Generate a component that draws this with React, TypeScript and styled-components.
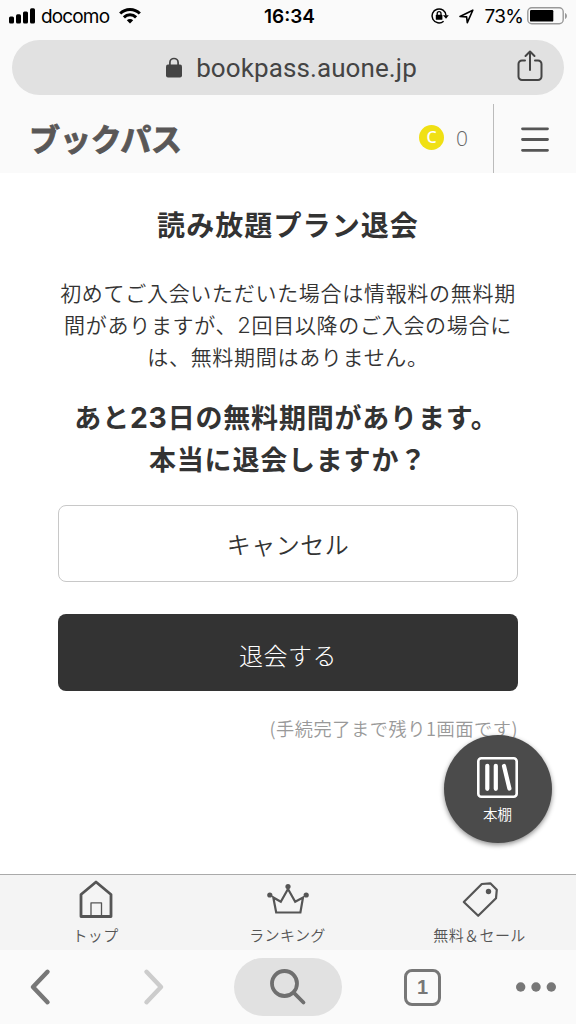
import React from "react";
import styled, { createGlobalStyle } from "styled-components";

const GlobalStyle = createGlobalStyle`
  *, *::before, *::after { box-sizing: border-box; }
  body { margin: 0; background: #fff; }
  button { border: 0; padding: 0; background: none; font: inherit; color: inherit; }
  h1, h2, p { margin: 0; }
  svg { display: block; flex: none; overflow: visible; }
`;

const Screen = styled.div`
  position: relative;
  display: flex;
  flex-direction: column;
  width: 576px;
  height: 1024px;
  overflow: hidden;
  background: #fff;
  color: #333;
  font-family: "Noto Sans CJK JP", sans-serif;
`;

const BrowserTop = styled.div`
  height: 104px;
  background: #fafafa;
`;

const StatusBar = styled.div`
  display: grid;
  grid-template-columns: 1fr auto 1fr;
  align-items: center;
  height: 32px;
  padding: 0 8px 0 9px;
  color: #000;
  font: 400 19px/24px Inter, sans-serif;
`;

const StatusGroup = styled.div<{ $end?: boolean }>`
  display: flex;
  align-items: center;
  justify-content: ${(p) => (p.$end ? "flex-end" : "flex-start")};
`;

const Carrier = styled.span`
  margin: 0 10px 0 6px;
  padding-top: 1px;
  letter-spacing: -0.85px;
`;

const Clock = styled.span`
  padding: 1px 0 0 2px;
  font-weight: 600;
  letter-spacing: 0;
`;

const Percent = styled.span`
  margin: 0 4px 0 11px;
  padding-top: 1px;
  letter-spacing: -0.8px;
`;

const AddressBar = styled.div`
  display: grid;
  grid-template-columns: 1fr auto 1fr;
  align-items: center;
  height: 55px;
  margin: 8px 12px 0;
  padding: 0 21px;
  border-radius: 28px;
  background: #e1e1e1;
  color: #444;
`;

const Address = styled.div`
  grid-column: 2;
  display: flex;
  align-items: center;
  gap: 14px;
  margin-left: 7px;
  font: 400 26px/32px Roboto, sans-serif;
  letter-spacing: 0.1px;
`;

const ShareButton = styled.button`
  justify-self: end;
  padding-bottom: 4px;
`;

const SiteHeader = styled.header`
  display: flex;
  align-items: center;
  height: 69px;
  padding-left: 29px;
  background: #fafafa;
`;

const Logo = styled.div`
  flex: 1;
  padding-bottom: 1px;
  color: #595757;
  font-size: 31px;
  font-weight: 700;
  line-height: 40px;
  letter-spacing: -0.1px;
  -webkit-text-stroke: 0.9px #595757;
`;

const Coin = styled.span`
  display: grid;
  place-items: center;
  width: 25px;
  height: 25px;
  margin-bottom: 3px;
  border-radius: 50%;
  background: #f0e014;
  color: #fff;
  font: 500 16px/25px "Noto Sans", sans-serif;
`;

const CoinCount = styled.span`
  width: 49px;
  padding: 0 0 2px 12px;
  color: #666;
  font: 300 21px/28px "Open Sans", sans-serif;
`;

const MenuButton = styled.button`
  display: grid;
  place-items: center;
  width: 83px;
  height: 69px;
  padding: 2px 0 0 0;
  border-left: 1.5px solid #bbb;
`;

const Content = styled.main`
  flex: 1;
  display: flex;
  flex-direction: column;
  padding: 29px 58px 0;
  text-align: center;
`;

const Title = styled.h1`
  font-size: 28px;
  font-weight: 700;
  line-height: 44px;
  letter-spacing: 1.1px;
`;

const Notice = styled.p`
  margin: 30px -10px 0;
  font-size: 21px;
  font-weight: 350;
  line-height: 32px;
  letter-spacing: 0.7px;
`;

const Question = styled.h2`
  margin: 24px -10px 0;
  font-size: 27px;
  font-weight: 700;
  line-height: 42px;
  letter-spacing: 0.8px;
`;

const QuestionLead = styled.span`
  margin-right: 3px;
`;

const Digits = styled.span`
  font-family: Inter, sans-serif;
  font-size: 1.05em;
  line-height: 0;
`;

const ActionButton = styled.button<{ $primary?: boolean }>`
  height: 77px;
  margin-top: ${(p) => (p.$primary ? 32 : 25)}px;
  padding-top: ${(p) => (p.$primary ? 4 : 1)}px;
  border: ${(p) => (p.$primary ? "0" : "1.5px solid #c8c8c8")};
  border-radius: 8px;
  background: ${(p) => (p.$primary ? "#333" : "#fff")};
  color: ${(p) => (p.$primary ? "#fff" : "#333")};
  font-size: 24px;
  font-weight: ${(p) => (p.$primary ? 300 : 350)};
  line-height: 36px;
  letter-spacing: 0.5px;
`;

const Remaining = styled.p`
  margin-top: 23px;
  color: #999;
  font-size: 18.2px;
  font-weight: 350;
  line-height: 28px;
  letter-spacing: 0.55px;
  text-align: right;
`;

const ShelfButton = styled.button`
  position: absolute;
  left: 444px;
  top: 735px;
  display: flex;
  flex-direction: column;
  align-items: center;
  width: 108px;
  height: 108px;
  padding: 22px 1px 0 0;
  border-radius: 50%;
  background: #4b4b4b;
  box-shadow: 0 2px 5px rgba(0, 0, 0, 0.45);
  color: #fff;
  font-size: 14.5px;
  font-weight: 350;
  line-height: 20px;
`;

const ShelfLabel = styled.span`
  margin-top: 6px;
`;

const SiteNav = styled.nav`
  display: grid;
  grid-template-columns: repeat(3, 1fr);
  height: 76px;
  border-top: 1.5px solid #aaa;
  background: #f4f4f4;
`;

const NavItem = styled.button`
  display: flex;
  flex-direction: column;
  align-items: center;
  padding: 5px 1px 0 0;
  color: #555;
  font-size: 15px;
  font-weight: 350;
  line-height: 22px;
  letter-spacing: 0.4px;
`;

const NavLabel = styled.span`
  margin-top: 6px;
`;

const BrowserBar = styled.div`
  display: flex;
  align-items: center;
  height: 74px;
  padding-left: 30px;
  background: #fafafa;
  color: #777;
`;

const BarButton = styled.button<{ $gap?: number }>`
  margin-left: ${(p) => p.$gap ?? 0}px;
`;

const SearchPill = styled(BarButton)`
  display: grid;
  place-items: center;
  width: 108px;
  height: 58px;
  border-radius: 29px;
  background: #e1e1e1;
`;

const TabCount = styled(BarButton)`
  width: 37px;
  height: 37px;
  border: 3.5px solid #777;
  border-radius: 8px;
  font: 700 20px/30px "Liberation Sans", sans-serif;
`;

const SignalIcon = () => (
  <svg width="26" height="16" viewBox="0 0 26 16" fill="#000">
    <rect x="0" y="8.5" width="5" height="7" rx="1.5" />
    <rect x="7" y="6.3" width="5" height="9.2" rx="1.5" />
    <rect x="14" y="3.5" width="5" height="12" rx="1.5" />
    <rect x="21" y="0.2" width="5" height="15.3" rx="1.5" />
  </svg>
);

const WifiIcon = () => (
  <svg width="22" height="16" viewBox="0 0 22 16" fill="none" stroke="#000" strokeWidth="3">
    <path d="M1.2 5.5C6.5 0 15.5 0 20.8 5.500" />
    <path d="M4.9 9.4c3.4-3.4 8.8-3.4 12.2 0" />
    <path d="M7.8 12.3c1.8-1.8 4.6-1.8 6.4 0L11 15.500z" fill="#000" stroke="none" />
  </svg>
);

const RotationLockIcon = () => (
  <svg width="18" height="16" viewBox="0 0 18 16" fill="none" stroke="#000" strokeWidth="1.5">
    <path d="M12.6 13.2A7 7 0 1 1 15 7.500" />
    <path d="M12 7.300h5.800L15 10.800z" fill="#000" stroke="none" />
    <rect x="4.800" y="6.800" width="6.600" height="5" rx="0.6" fill="#000" stroke="none" />
    <path d="M6.200 7V5.500a1.900 1.900 0 0 1 3.800 0V7" strokeWidth="1.300" />
  </svg>
);

const LocationIcon = () => (
  <svg width="15" height="15" viewBox="0 0 15 15" fill="none" stroke="#000" strokeWidth="1.6" strokeLinejoin="round">
    <path d="M1 7.500 13.800 1.200 8.300 13.600 7.600 7.900z" />
  </svg>
);

const StatusIcons = styled.span`
  display: flex;
  align-items: center;
  gap: 10px;
`;

const BatteryIcon = () => (
  <svg width="41" height="18" viewBox="0 0 41 18">
    <rect x="0.8" y="0.8" width="35.400" height="16" rx="4" fill="none" stroke="#999" strokeWidth="1.4" />
    <rect x="3" y="3" width="23.300" height="11.600" rx="1.2" fill="#000" />
    <path d="M38 6c2.600.7 2.600 5.300 0 6z" fill="#999" />
  </svg>
);

const LockIcon = () => (
  <svg width="16" height="20" viewBox="0 0 16 20" fill="none" stroke="#444" strokeWidth="1.7">
    <rect x="0" y="6.500" width="16" height="13" rx="2" fill="#444" stroke="none" />
    <path d="M3.900 8V4.600a4.100 4.100 0 0 1 8.200 0V8" />
  </svg>
);

const ShareIcon = () => (
  <svg width="26" height="32" viewBox="0 0 26 32" fill="none" stroke="#444" strokeWidth="2" strokeLinecap="round" strokeLinejoin="round">
    <path d="M8 10.500H5a3.500 3.500 0 0 0-3.500 3.500v12.500A3.500 3.500 0 0 0 5 30h16a3.500 3.500 0 0 0 3.500-3.500V14a3.500 3.500 0 0 0-3.500-3.500h-3M13 20V2M8.500 6 13 1.500 17.500 6" />
  </svg>
);

const MenuIcon = () => (
  <svg width="28" height="25" viewBox="0 0 28 25" stroke="#555" strokeWidth="2.800" strokeLinecap="round">
    <path d="M1.500 1.800h25M1.500 12.500h25M1.500 23.300h25" />
  </svg>
);

const ShelfIcon = () => (
  <svg width="41" height="41" viewBox="0 0 41 41" fill="none" stroke="#fff" strokeLinecap="round">
    <rect x="1.300" y="1.300" width="38.400" height="38.400" rx="3" strokeWidth="2.600" />
    <path d="M10.300 8.800v23M18.800 8.800v23M27 9l5.400 22.500" strokeWidth="4.200" />
  </svg>
);

const HomeIcon = () => (
  <svg width="34" height="38" viewBox="0 0 34 38" fill="none" stroke="#555" strokeLinejoin="round">
    <path d="M2 14.500 17 2l15 12.500V36.500H2z" strokeWidth="2.800" />
    <path d="M12 36V22.800h10.500V36" strokeWidth="1.300" />
  </svg>
);

const CrownIcon = () => (
  <svg width="42" height="38" viewBox="0 0 42 38" fill="none" stroke="#555">
    <path d="M6.300 17.500 9.200 32.500h24.200l2.600-15-7.800 4.300L21 9l-7.200 12.800z" strokeWidth="2.200" />
    <g fill="#555" stroke="none">
      <circle cx="2.800" cy="15" r="2.600" />
      <circle cx="21" cy="6.500" r="2.600" />
      <circle cx="39.200" cy="15" r="2.600" />
    </g>
  </svg>
);

const TagIcon = () => (
  <svg width="36" height="38" viewBox="0 0 36 38" fill="none" stroke="#555" strokeWidth="2.200" strokeLinejoin="round">
    <path d="M1.800 22 19.800 4 28.300 3.300 34.800 9.700 34 18.300 16.200 35.800z" />
    <circle cx="26.500" cy="11.500" r="2.700" fill="#555" stroke="none" />
  </svg>
);

const BackIcon = () => (
  <svg width="20" height="36" viewBox="0 0 20 36" fill="none" stroke="#777" strokeWidth="4.500" strokeLinecap="round" strokeLinejoin="round">
    <path d="M17.500 2.800 3 18l14.500 15.200" />
  </svg>
);

const ForwardIcon = () => (
  <svg width="20" height="36" viewBox="0 0 20 36" fill="none" stroke="#ccc" strokeWidth="4.500" strokeLinecap="round" strokeLinejoin="round">
    <path d="M2.500 2.800 17 18 2.500 33.200" />
  </svg>
);

const SearchIcon = () => (
  <svg width="36" height="36" viewBox="0 0 36 36" fill="none" stroke="#6f6f6f" strokeWidth="3.800" strokeLinecap="round">
    <circle cx="14.500" cy="14.500" r="12.500" />
    <path d="m23.700 23.700 9.800 9.800" />
  </svg>
);

const MoreIcon = () => (
  <svg width="40" height="10" viewBox="0 0 40 10" fill="#777">
    <circle cx="4.700" cy="5" r="4.700" />
    <circle cx="20" cy="5" r="4.700" />
    <circle cx="35.300" cy="5" r="4.700" />
  </svg>
);

export default function App() {
  return (
    <Screen>
      <GlobalStyle />
      <BrowserTop>
        <StatusBar>
          <StatusGroup>
            <SignalIcon />
            <Carrier>docomo</Carrier>
            <WifiIcon />
          </StatusGroup>
          <Clock>16:34</Clock>
          <StatusGroup $end>
            <StatusIcons>
              <RotationLockIcon />
              <LocationIcon />
            </StatusIcons>
            <Percent>73%</Percent>
            <BatteryIcon />
          </StatusGroup>
        </StatusBar>
        <AddressBar>
          <Address>
            <LockIcon />
            <span>bookpass.auone.jp</span>
          </Address>
          <ShareButton aria-label="共有">
            <ShareIcon />
          </ShareButton>
        </AddressBar>
      </BrowserTop>

      <SiteHeader>
        <Logo>ブックパス</Logo>
        <Coin>C</Coin>
        <CoinCount>0</CoinCount>
        <MenuButton aria-label="メニュー">
          <MenuIcon />
        </MenuButton>
      </SiteHeader>

      <Content>
        <Title>読み放題プラン退会</Title>
        <Notice>
          初めてご入会いただいた場合は情報料の無料期
          <br />
          間がありますが、<Digits>2</Digits>回目以降のご入会の場合に
          <br />
          は、無料期間はありません。
        </Notice>
        <Question>
          <QuestionLead>
            あと<Digits>23</Digits>日の無料期間があります。
          </QuestionLead>
          <br />
          本当に退会しますか？
        </Question>
        <ActionButton>キャンセル</ActionButton>
        <ActionButton $primary>退会する</ActionButton>
        <Remaining>(手続完了まで残り1画面です)</Remaining>
      </Content>

      <SiteNav>
        <NavItem>
          <HomeIcon />
          <NavLabel>トップ</NavLabel>
        </NavItem>
        <NavItem>
          <CrownIcon />
          <NavLabel>ランキング</NavLabel>
        </NavItem>
        <NavItem>
          <TagIcon />
          <NavLabel>無料＆セール</NavLabel>
        </NavItem>
      </SiteNav>

      <BrowserBar>
        <BarButton aria-label="戻る">
          <BackIcon />
        </BarButton>
        <BarButton $gap={94} aria-label="進む">
          <ForwardIcon />
        </BarButton>
        <SearchPill $gap={70} aria-label="検索">
          <SearchIcon />
        </SearchPill>
        <TabCount $gap={62}>1</TabCount>
        <BarButton $gap={75} aria-label="その他">
          <MoreIcon />
        </BarButton>
      </BrowserBar>

      <ShelfButton>
        <ShelfIcon />
        <ShelfLabel>本棚</ShelfLabel>
      </ShelfButton>
    </Screen>
  );
}
